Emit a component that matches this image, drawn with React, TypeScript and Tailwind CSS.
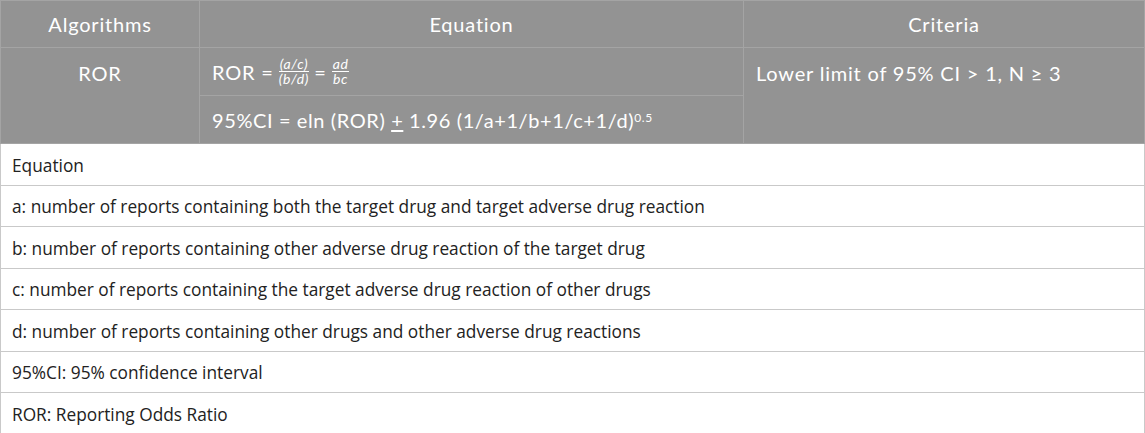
const head = "font-['Lato',sans-serif] text-white tracking-[0.8px]"
const greyCell = 'border border-[#a4a4a4] align-top'
const whiteCell = 'border border-[#c9c9c9] px-[11px] pt-[3px] h-[41.5px] align-middle'

function Frac({ top, bottom }: { top: string; bottom: string }) {
  return (
    <span className="mx-[5px] inline-flex flex-col items-center align-middle text-[14px] italic leading-[12px] tracking-[0.6px]">
      <span className="border-b border-white px-[1px] pb-[1px]">{top}</span>
      <span className="pt-[1px]">{bottom}</span>
    </span>
  )
}

const notes = [
  'Equation',
  'a: number of reports containing both the target drug and target adverse drug reaction',
  'b: number of reports containing other adverse drug reaction of the target drug',
  'c: number of reports containing the target adverse drug reaction of other drugs',
  'd: number of reports containing other drugs and other adverse drug reactions',
  '95%CI: 95% confidence interval',
  'ROR: Reporting Odds Ratio',
]

export default function App() {
  return (
    <div className="h-[433px] w-[1145px] bg-white">
      <table className="w-[1144px] table-fixed border-collapse">
        <colgroup>
          <col className="w-[199px]" />
          <col className="w-[544px]" />
          <col className="w-[401px]" />
        </colgroup>
        <thead className={`bg-[#939393] ${head}`}>
          <tr className="h-[47px]">
            <th className="border border-[#a4a4a4] text-center text-[20px] font-normal">Algorithms</th>
            <th className="border border-[#a4a4a4] text-center text-[20px] font-normal">Equation</th>
            <th className="border border-[#a4a4a4] text-center text-[20px] font-normal">Criteria</th>
          </tr>
        </thead>
        <tbody className={`bg-[#939393] ${head} text-[20px]`}>
          <tr className="h-[48px]">
            <td rowSpan={2} className={`${greyCell} pt-[10px] text-center`}>
              ROR
            </td>
            <td className="border border-[#a4a4a4] px-[12px] align-middle">
              <span className="inline-flex items-center">
                ROR =<Frac top="(a/c)" bottom="(b/d)" />=<Frac top="ad" bottom="bc" />
              </span>
            </td>
            <td rowSpan={2} className={`${greyCell} px-[12px] pt-[10px]`}>
              Lower limit of 95% CI &gt; 1, N ≥ 3
            </td>
          </tr>
          <tr className="h-[48px]">
            <td className="border border-[#a4a4a4] px-[12px] align-middle tracking-[0.6px]">
              95%CI = eln (ROR) <span className="underline underline-offset-2">+</span> 1.96 (1/a+1/b+1/c+1/d)
              <sup className="text-[12px]">0.5</sup>
            </td>
          </tr>
        </tbody>
        <tbody className="font-['Open_Sans',sans-serif] text-[17.3px] text-[#222]">
          {notes.map((n) => (
            <tr key={n}>
              <td colSpan={3} className={whiteCell}>
                {n}
              </td>
            </tr>
          ))}
        </tbody>
      </table>
    </div>
  )
}
